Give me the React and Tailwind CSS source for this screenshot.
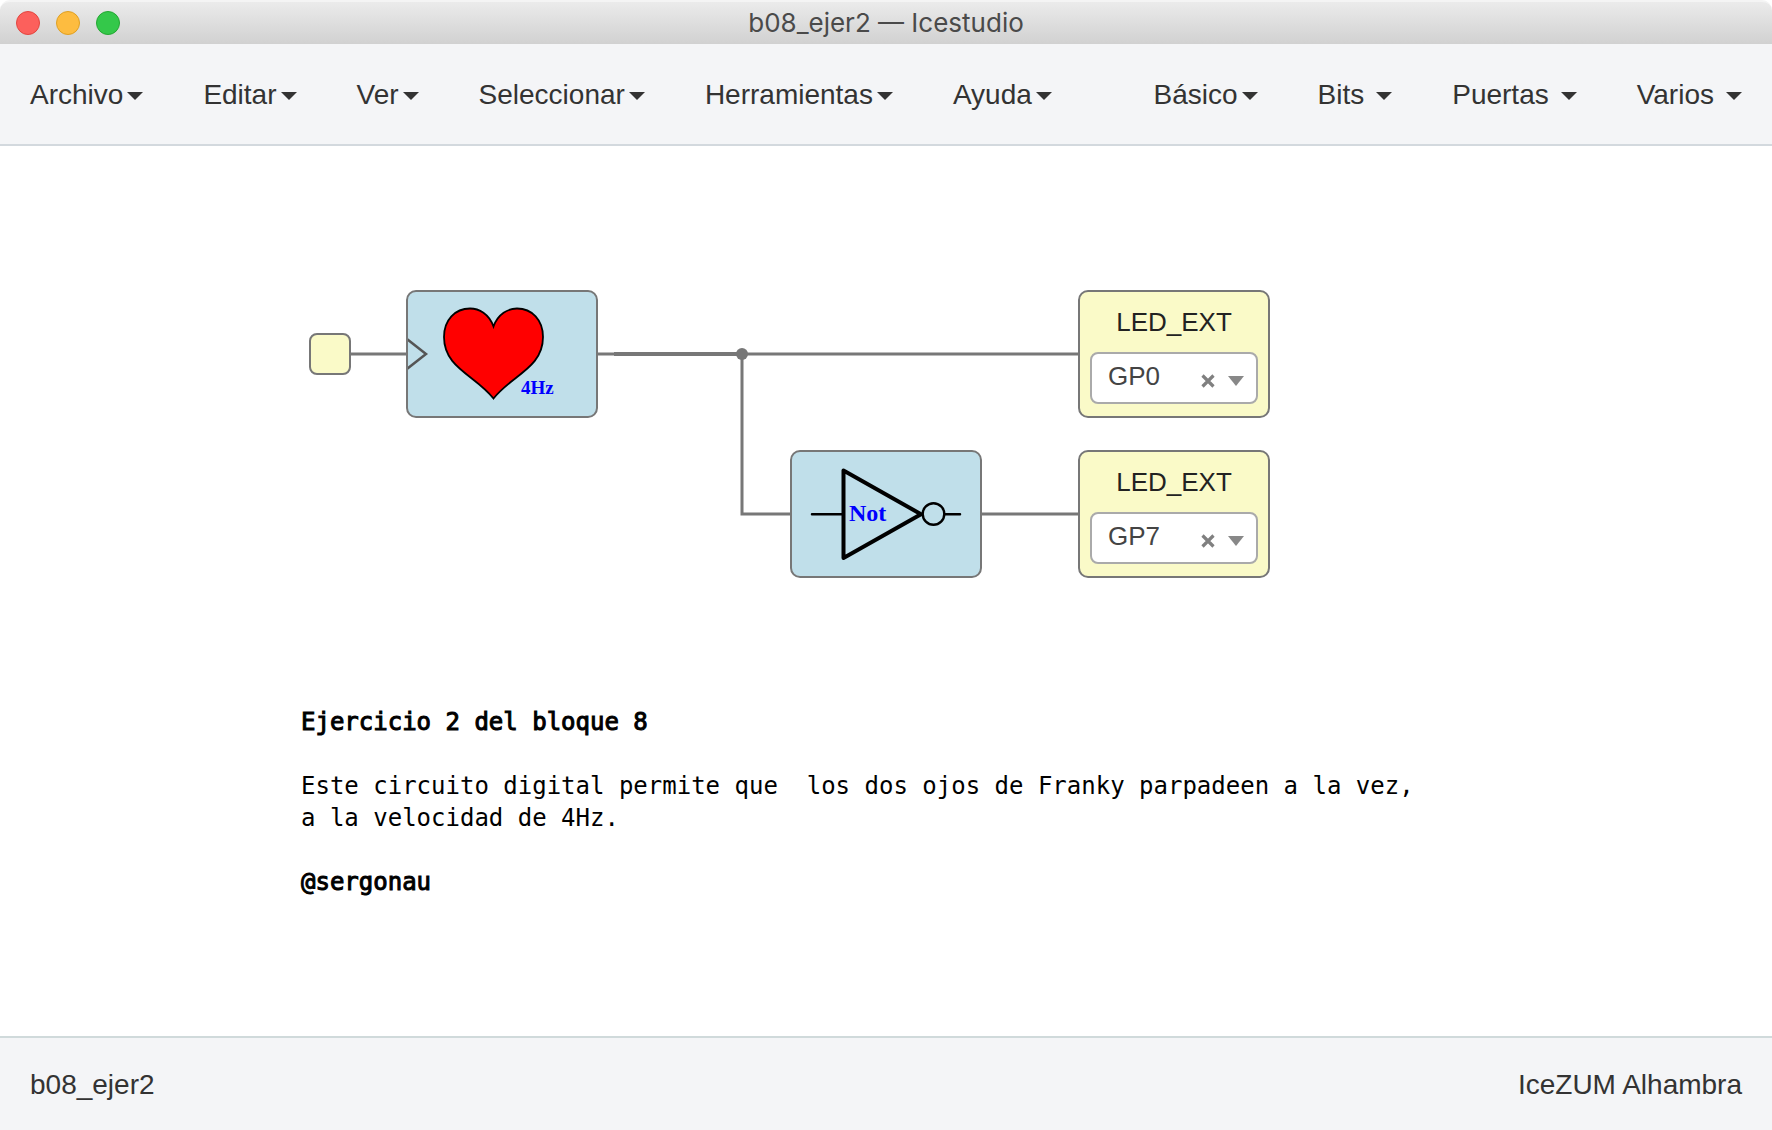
import React from "react";

const fileMenus = ["Archivo", "Editar", "Ver", "Seleccionar", "Herramientas", "Ayuda"];
const blockMenus = [
  { label: "Básico" },
  { label: "Bits", spaced: true },
  { label: "Puertas", spaced: true },
  { label: "Varios", spaced: true },
];

function MenuButton({ label, spaced }) {
  return (
    <button type="button" className="flex items-center whitespace-nowrap">
      <span>{label}</span>
      <svg
        className={spaced ? "ml-3 mt-0.5 h-2 w-4" : "ml-1 mt-0.5 h-2 w-4"}
        viewBox="0 0 16 8"
        aria-hidden="true"
      >
        <path d="M0 0H16L8 8Z" fill="currentColor" />
      </svg>
    </button>
  );
}

function TitleBar() {
  return (
    <header className="grid h-11 grid-cols-[1fr_auto_1fr] items-center rounded-t-[10px] border-t-2 border-[#f4f4f4] bg-linear-to-b from-[#ebebeb] to-[#d1d1d1] px-4">
      <div className="flex gap-4">
        <button type="button" aria-label="Cerrar" className="size-6 rounded-full border border-[#e2463f] bg-[#fc605c]" />
        <button type="button" aria-label="Minimizar" className="size-6 rounded-full border border-[#dfa023] bg-[#fdbc40]" />
        <button type="button" aria-label="Maximizar" className="size-6 rounded-full border border-[#24a732] bg-[#34c84a]" />
      </div>
      <h1 className="font-[Inter,sans-serif] text-[26px] leading-8 text-[#4a4a4a]">b08_ejer2 — Icestudio</h1>
    </header>
  );
}

function LedBlock({ id, pin, className }) {
  return (
    <div
      className={`absolute h-32 w-48 rounded-[10px] border-2 border-[#777777] bg-[#fafac8] px-2.5 pt-2.5 ${className}`}
    >
      <label htmlFor={id} className="block text-center text-[26px] leading-10 text-[#222222]">
        LED_EXT
      </label>
      <div className="relative mt-2.5">
        <select
          id={id}
          defaultValue={pin}
          className="block h-[52px] w-full appearance-none rounded-lg border-2 border-[#aaaaaa] bg-white pb-1 pl-4 text-[26px] leading-8 text-[#444444]"
        >
          <option>GP0</option>
          <option>GP7</option>
        </select>
        <button type="button" aria-label="Quitar" className="absolute right-[43px] top-[22px]">
          <svg className="size-[14px]" viewBox="0 0 14 14" fill="none" stroke="#808080" strokeWidth="3.2">
            <path d="M1.5 1.5L12.5 12.5M12.5 1.5L1.5 12.5" />
          </svg>
        </button>
        <svg className="pointer-events-none absolute right-[14px] top-6 h-[10px] w-4" viewBox="0 0 16 10" aria-hidden="true">
          <path d="M0 0H16L8 10Z" fill="#888888" />
        </svg>
      </div>
    </div>
  );
}

function HeartBlock() {
  return (
    <div className="absolute left-[406px] top-36 h-32 w-48 rounded-[10px] border-2 border-[#777777] bg-[#c0dfea]">
      <svg className="block h-[124px] w-[188px]" viewBox="408 292 188 124">
        <path d="M407 339L426 354L407 369" fill="none" stroke="#555555" strokeWidth="2.5" />
        <path
          d="M493.5 326.5C489 314 479 308.5 470 308.5C455 308.5 444 320 444 337C444 368 475 375 493.5 398.5C512 375 543 368 543 337C543 320 532 308.5 517 308.5C508 308.5 498 314 493.5 326.5Z"
          fill="#ff0000"
          stroke="#000000"
          strokeWidth="1.8"
        />
        <text x="521" y="394" fill="#0000ff" className="font-['Liberation_Serif',serif] text-[19px] font-bold">
          4Hz
        </text>
      </svg>
    </div>
  );
}

function NotBlock() {
  return (
    <div className="absolute left-[790px] top-[304px] h-32 w-48 rounded-[10px] border-2 border-[#777777] bg-[#c0dfea]">
      <svg className="block h-[124px] w-[188px]" viewBox="792 452 188 124">
        <g fill="none" stroke="#000000" strokeLinecap="round" strokeLinejoin="round">
          <path d="M843.5 470.5V558L921 514.2Z" strokeWidth="4" />
          <path d="M812 514.2H843M945 514.2H960" strokeWidth="2.5" />
          <circle cx="933.5" cy="514" r="10.8" strokeWidth="2.4" />
        </g>
        <text x="849" y="521" fill="#0000ff" className="font-['Liberation_Serif',serif] text-[24px] font-bold">
          Not
        </text>
      </svg>
    </div>
  );
}

function Wires() {
  return (
    <svg className="absolute left-0 top-0 h-[500px] w-[1300px]" viewBox="0 146 1300 500" fill="none" stroke="#777777" strokeWidth="3">
      <path d="M350 354H407M597 354H1079M742 354V514H791M981 514H1079" />
      <path d="M614 354H742" strokeWidth="4" />
      <circle cx="742" cy="354" r="6" fill="#777777" stroke="none" />
    </svg>
  );
}

export default function App() {
  return (
    <div className="flex min-h-screen flex-col bg-white font-['Liberation_Sans',Arial,sans-serif] text-[28px] leading-8 text-[#333333]">
      <TitleBar />
      <nav className="flex h-[102px] items-center justify-between border-b-2 border-[#d3d9de] bg-[#f4f5f7] px-[30px] pt-0.5">
        <div className="flex gap-[60px]">
          {fileMenus.map((label) => (
            <MenuButton key={label} label={label} />
          ))}
        </div>
        <div className="flex gap-[60px]">
          {blockMenus.map((menu) => (
            <MenuButton key={menu.label} {...menu} />
          ))}
        </div>
      </nav>

      <main className="relative min-h-[800px] flex-1 overflow-hidden">
        <Wires />
        <div className="absolute left-[309px] top-[187px] size-[42px] rounded-lg border-2 border-[#777777] bg-[#fafac8]" />
        <HeartBlock />
        <NotBlock />
        <LedBlock id="led-gp0" pin="GP0" className="left-[1078px] top-36" />
        <LedBlock id="led-gp7" pin="GP7" className="left-[1078px] top-[304px]" />
        <div className="absolute left-[301px] top-[560px] whitespace-pre font-['DejaVu_Sans_Mono',monospace] text-[24px] leading-8 text-black">
          <p className="[-webkit-text-stroke:1px_black]">Ejercicio 2 del bloque 8</p>
          <p className="mt-8">{"Este circuito digital permite que  los dos ojos de Franky parpadeen a la vez,\na la velocidad de 4Hz."}</p>
          <p className="mt-8 [-webkit-text-stroke:1px_black]">@sergonau</p>
        </div>
      </main>

      <footer className="flex h-[94px] items-center justify-between border-t-2 border-[#d0dadb] bg-[#f4f5f7] px-[30px] pt-0.5">
        <span>b08_ejer2</span>
        <span>IceZUM Alhambra</span>
      </footer>
    </div>
  );
}
